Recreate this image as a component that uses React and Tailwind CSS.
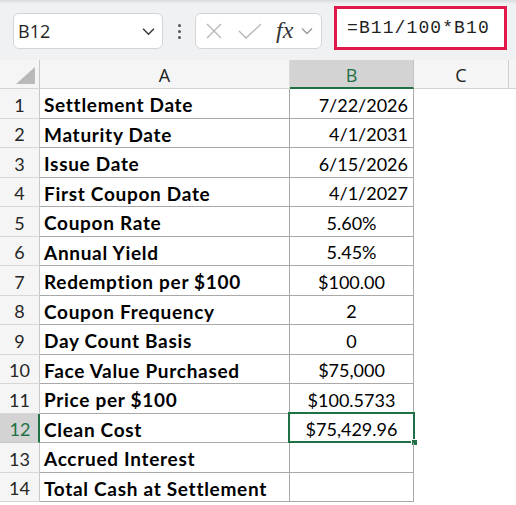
import React from "react";

const rows = [
  ["Settlement Date", "7/22/2026", "right"],
  ["Maturity Date", "4/1/2031", "right"],
  ["Issue Date", "6/15/2026", "right"],
  ["First Coupon Date", "4/1/2027", "right"],
  ["Coupon Rate", "5.60%", "center"],
  ["Annual Yield", "5.45%", "center"],
  ["Redemption per $100", "$100.00", "center"],
  ["Coupon Frequency", "2", "center"],
  ["Day Count Basis", "0", "center"],
  ["Face Value Purchased", "$75,000", "center"],
  ["Price per $100", "$100.5733", "center"],
  ["Clean Cost", "$75,429.96", "center"],
  ["Accrued Interest", "", "center"],
  ["Total Cash at Settlement", "", "center"],
];

const cellFont = { fontFamily: "Lato, 'Open Sans', sans-serif" };

function Chevron({ className }) {
  return (
    <svg viewBox="0 0 12 8" className={className} fill="none" stroke="currentColor" strokeWidth="1.4">
      <path d="M1 1.5 L6 6.5 L11 1.5" />
    </svg>
  );
}

function Toolbar() {
  return (
    <div className="relative h-[60px] bg-[#eff1f2] flex items-center">
      <div className="absolute inset-x-0 top-0 h-[4px] bg-gradient-to-b from-[#d9dbdc] to-[#eff1f2]" />
      {/* name box */}
      <div className="ml-[13px] mt-[2px] w-[150px] h-[36px] bg-white border border-[#d3d5d7] rounded-[6px] flex items-center pl-[4px] pr-[7px]">
        <span className="text-[18px] text-[#1f1f1f] flex-1" style={{ fontFamily: "'Open Sans', sans-serif" }}>B12</span>
        <Chevron className="w-[13px] h-[9px] text-[#3a3a3a]" />
      </div>
      {/* separator dots */}
      <div className="ml-[15px] mt-[2px] flex flex-col gap-[3px]">
        <div className="w-[3px] h-[3px] bg-[#555] rounded-full" />
        <div className="w-[3px] h-[3px] bg-[#555] rounded-full" />
        <div className="w-[3px] h-[3px] bg-[#555] rounded-full" />
      </div>
      {/* cancel / enter / fx */}
      <div className="ml-[14px] mt-[2px] w-[127px] h-[36px] bg-white border border-[#d3d5d7] rounded-[6px] flex items-center pl-[10px]">
        <svg viewBox="0 0 16 16" className="w-[16px] h-[16px]" fill="none" stroke="#b5b5b5" strokeWidth="1.3">
          <path d="M1 1 L15 15 M15 1 L1 15" />
        </svg>
        <svg viewBox="0 0 24 16" className="ml-[16px] w-[24px] h-[16px]" fill="none" stroke="#b5b5b5" strokeWidth="1.3">
          <path d="M1 8 L8 15 L23 1" />
        </svg>
        <span className="ml-[14px] text-[24px] italic text-[#333] leading-none -mt-[3px]" style={{ fontFamily: "'Liberation Serif', serif" }}>fx</span>
        <Chevron className="ml-[8px] w-[12px] h-[8px] text-[#9a9a9a]" />
      </div>
      {/* formula input */}
      <div className="ml-[12px] -mt-[4px] w-[173px] h-[44px] bg-white border-[3px] border-[#e1194a] flex items-center pl-[10px]">
        <span className="text-[18px] tracking-[1.1px] text-[#1f1f1f]" style={{ fontFamily: "'Liberation Mono', monospace" }}>=B11/100*B10</span>
      </div>
    </div>
  );
}

function HeaderRow() {
  return (
    <div className="flex h-[29px] bg-[#f5f5f5] border-b border-[#d4d4d4] text-[18px] text-[#222]" style={{ fontFamily: "'Open Sans', sans-serif" }}>
      <div className="relative w-[40px] border-r border-[#c8c8c8]">
        <svg viewBox="0 0 20 18" className="absolute left-[16px] bottom-[4px] w-[19px] h-[17px]">
          <path d="M20 0 L20 18 L0 18 Z" fill="#b9b9b9" />
        </svg>
      </div>
      <div className="w-[250px] flex items-center justify-center pt-[3px] border-r border-[#dadada]">A</div>
      <div className="w-[124px] flex items-center justify-center pt-[3px] bg-[#d3d3d3] text-[#1e7145] border-b-2 border-[#1e7145] -mb-[1px] border-r border-r-[#c4c4c4]">B</div>
      <div className="w-[95px] flex items-center justify-center pt-[3px] border-r border-[#cfcfcf]">C</div>
      <div className="flex-1" />
    </div>
  );
}

function Row({ n, label, value, align }) {
  const selected = n === 12;
  return (
    <div className="flex h-[29.5px]" style={cellFont}>
      <div
        className={
          "w-[40px] flex items-center justify-center pt-[4px] text-[18px] border-b " +
          (selected
            ? "bg-[#d3d3d3] text-[#1e7145] border-b-[#c8c8c8] border-r-2 border-r-[#1e7145]"
            : "bg-[#f5f5f5] text-[#262626] border-b-[#d6d6d6] border-r border-r-[#c8c8c8]")
        }
      >
        <span className={selected ? "pl-[2px]" : ""}>{n}</span>
      </div>
      <div className="w-[250px] flex items-center pl-[4px] pt-[4px] border-b border-r border-[#a9a9a9] text-[19px] tracking-[0.7px] font-bold text-black whitespace-nowrap overflow-hidden">
        {label}
      </div>
      <div
        className={
          "relative w-[124px] flex items-center pt-[4px] border-b border-r border-[#a9a9a9] text-[18px] text-black " +
          (align === "right" ? "justify-end pr-[5px]" : "justify-center")
        }
      >
        {value}
        {selected && (
          <>
            <div className="absolute -left-[2px] -top-[2px] -right-[2px] -bottom-[1px] border-2 border-[#1e7145]" />
            <div className="absolute -right-[5px] -bottom-[4px] w-[7px] h-[7px] bg-[#1e7145] border border-white" />
          </>
        )}
      </div>
      <div className="flex-1 bg-white" />
    </div>
  );
}

export default function App() {
  return (
    <div className="w-[516px] h-[505px] overflow-hidden bg-white">
      <Toolbar />
      <HeaderRow />
      {rows.map(([label, value, align], i) => (
        <Row key={i} n={i + 1} label={label} value={value} align={align} />
      ))}
    </div>
  );
}
